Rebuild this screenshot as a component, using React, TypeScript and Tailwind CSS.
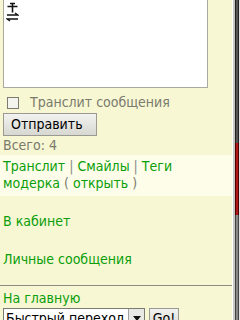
const font = { fontFamily: '"DejaVu Sans Condensed", "DejaVu Sans", sans-serif' };

function Sep() {
  return <span className="text-[#8a8a8a]"> | </span>;
}

export default function App() {
  return (
    <div className="flex h-[320px] w-[240px] overflow-hidden bg-[#f7f7d3] text-[14px] leading-[17px]" style={font}>
      <div className="w-[232px] shrink-0">
        {/* message box, scrolled so its top is out of view */}
        <div className="ml-[3px] h-[88px] w-[205px] border-x border-b border-[#a9a9a0] bg-white pl-[2px] pt-[2px]">
          <svg width="13" height="20" viewBox="0 0 13 20">
            <path d="M4 1.5h5M6.5 1.5v9M1.5 4.5h10" stroke="#111" strokeWidth="1.6" fill="none" />
            <path d="M1 13h11L9 11" stroke="#111" strokeWidth="1.3" fill="none" />
            <path d="M12 17H1l3 2" stroke="#111" strokeWidth="1.3" fill="none" />
          </svg>
        </div>

        <label className="mt-[6px] flex h-[17px] items-center gap-[11px] pl-[7px] text-[14px] text-[#7a7a6e]">
          <span className="h-[12px] w-[12px] shrink-0 border border-[#7b7b73] bg-[#f4f4ee]" />
          Транслит сообщения
        </label>

        <button className="mt-[2px] ml-[3px] block h-[23px] w-[94px] border border-[#9a9a92] bg-gradient-to-b from-[#f2f2f0] to-[#d8d8d2] pl-[7px] text-left text-[14px] text-black">
          Отправить
        </button>

        <div className="ml-[3px] mt-[1px] text-[#7a7a6e]">Всего: 4</div>

        <div className="mt-[1px] bg-[#fdfde9] px-[3px] pt-[3px] pb-[4px] text-[#0a9e0a]">
          <div>
            Транслит<Sep />Смайлы<Sep />Теги
          </div>
          <div>
            модерка <span className="text-[#7a7a6e]">(</span> открыть <span className="text-[#7a7a6e]">)</span>
          </div>
        </div>

        <div className="ml-[3px] mt-[17px] text-[#0a9e0a]">В кабинет</div>
        <div className="ml-[3px] mt-[21px] text-[#0a9e0a]">Личные сообщения</div>

        <div className="mt-[17px] border-t border-[#8c8c80] pl-[3px] pt-[4px] text-[#0a9e0a]">На главную</div>

        <div className="ml-[3px] mt-[1px] flex items-start gap-[4px]">
          <div className="flex h-[21px] w-[142px] items-center border border-[#7b7b73] bg-white">
            <span className="flex-1 truncate pl-[2px] text-[14px] text-black">Быстрый переход</span>
            <span className="flex h-[19px] w-[16px] items-center justify-center border-l border-[#a0a0a0] bg-[#e8e8e4]">
              <svg width="8" height="5" viewBox="0 0 8 5">
                <path d="M0 0h8L4 5z" fill="#111" />
              </svg>
            </span>
          </div>
          <button className="h-[21px] w-[30px] border border-[#9a9a92] bg-gradient-to-b from-[#f2f2f0] to-[#d8d8d2] text-[14px] text-black">
            Go!
          </button>
        </div>
      </div>

      {/* scrollbar */}
      <div className="flex w-[8px] shrink-0">
        <div className="w-[1px] bg-white" />
        <div className="w-[2px] bg-[#c8c8c0]" />
        <div className="flex w-[4px] flex-col bg-[#9a9a9a]">
          <div className="h-[143px] shrink-0 border-x border-[#222] bg-[#555]" />
          <div className="h-[72px] shrink-0 border-x border-[#4a0000] bg-[#b01818]" />
          <div className="flex-1 border-x border-[#444] bg-[#888]" />
        </div>
        <div className="w-[1px] bg-[#e0e0e0]" />
      </div>
    </div>
  );
}
